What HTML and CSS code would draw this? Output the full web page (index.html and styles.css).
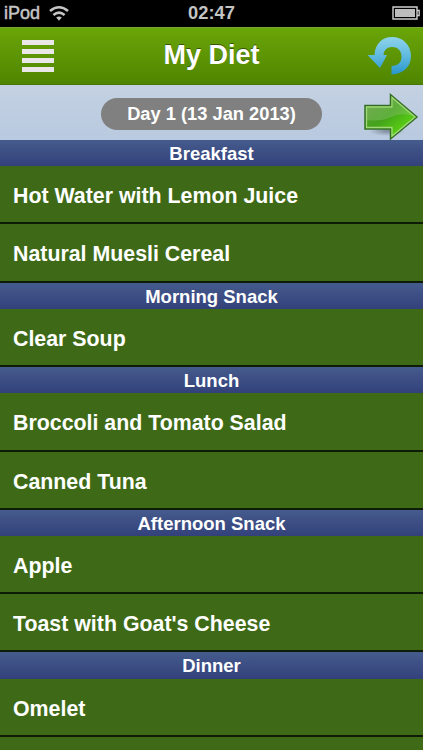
FILE: index.html
```html
<!DOCTYPE html>
<html lang="en">
<head>
<meta charset="utf-8">
<title>My Diet</title>
<link rel="stylesheet" href="styles.css">
</head>
<body>
<div class="status">
  <div class="carrier"><span>iPod</span>
    <svg width="20" height="16" viewBox="0 0 20 16" fill="none" stroke="#c4c4c4" stroke-width="2.6"><path d="M1 6Q10-1.5 19 6M4.400 10Q10 5.300 15.600 10"/><path d="M10 15.700L7.200 12.600Q10 10.400 12.800 12.600Z" fill="#c4c4c4" stroke="none"/></svg>
  </div>
  <time>02:47</time>
  <svg class="battery" width="28" height="14" viewBox="0 0 28 14"><path d="M1 1H25V13H1Z" fill="none" stroke="#d0d0d0" stroke-width="1.4"/><path d="M3 3H23V11H3Z" fill="#bdbdbd"/><path d="M25 4.500H27.200V9.500H25" fill="none" stroke="#d0d0d0" stroke-width="1.3"/></svg>
</div>
<header class="nav">
  <div class="menu"><i></i><i></i><i></i><i></i></div>
  <h1>My Diet</h1>
  <svg class="refresh" width="46" height="42" viewBox="0 0 46 42">
    <defs><linearGradient id="blue" x1="0" y1="0" x2="0" y2="1"><stop offset="0" stop-color="#8ed3ec"/><stop offset=".5" stop-color="#60bade"/><stop offset="1" stop-color="#2996cc"/></linearGradient></defs>
    <path d="M8.500 20C9 9 16 2 26 2C37 2 45 10 45 21C45 32 37 39 25.500 39.500V31C31 31 35.500 28 35.500 22C35.500 15 31 12 26 12C21 12 18 15 17.500 20H21L14 33L1.500 20Z" fill="url(#blue)"/>
  </svg>
</header>
<div class="datebar">
  <div class="pill">Day 1 (13 Jan 2013)</div>
  <svg class="next" width="58" height="50" viewBox="0 0 58 50">
    <defs><linearGradient id="green" x1="0" y1="0" x2="1" y2="1"><stop offset="0" stop-color="#5f9e3c"/><stop offset=".45" stop-color="#44a31b"/><stop offset=".7" stop-color="#55c814"/><stop offset="1" stop-color="#3c9a18"/></linearGradient>
    <radialGradient id="shade"><stop offset="0" stop-color="#53606b" stop-opacity=".6"/><stop offset="1" stop-color="#53606b" stop-opacity="0"/></radialGradient></defs>
    <ellipse cx="24" cy="39" rx="18" ry="5" fill="url(#shade)"/>
    <path d="M2 13.500H27.500V2.500L54 25L27.500 47V37H2Z" fill="url(#green)" stroke="#326c25" stroke-width="1.500"/>
    <path d="M3.500 15H29V5.500L52 25L29 44V35.500H3.500Z" fill="none" stroke="#a3d879" stroke-width="1.300"/>
    <path d="M4 16H30V7L50 24Q38 20 28 25Q18 30 4 28Z" fill="#b5d5a2" opacity=".25"/>
  </svg>
</div>
<main>
  <h2>Breakfast</h2>
  <p>Hot Water with Lemon Juice</p>
  <p>Natural Muesli Cereal</p>
  <h2>Morning Snack</h2>
  <p>Clear Soup</p>
  <h2>Lunch</h2>
  <p>Broccoli and Tomato Salad</p>
  <p>Canned Tuna</p>
  <h2>Afternoon Snack</h2>
  <p>Apple</p>
  <p>Toast with Goat's Cheese</p>
  <h2>Dinner</h2>
  <p>Omelet</p>
</main>
</body>
</html>
```
FILE: styles.css
```css
* { box-sizing: border-box; }
body {
  margin: 0;
  height: 750px;
  overflow: hidden;
  background: #3e6a17;
  color: #fff;
  font-family: "Liberation Sans", Arial, sans-serif;
}
.status {
  height: 26.500px;
  background: #000;
  color: #c4c4c4;
  display: grid;
  grid-template-columns: 1fr auto 1fr;
  align-items: center;
  padding: 0 4px;
  font-size: 18px;
}
.carrier { display: flex; align-items: center; gap: 9px; -webkit-text-stroke: .5px #c4c4c4; }
.status time { font-weight: bold; font-size: 18.300px; }
.battery { justify-self: end; margin-right: -1px; }
.nav {
  height: 58.500px;
  display: grid;
  grid-template-columns: 1fr auto 1fr;
  align-items: center;
  padding: 0 11px;
  background: linear-gradient(#6aa508, #4f8500);
  border-top: 1px solid #78a936;
  border-bottom: 1px solid #477607;
}
.menu { display: grid; gap: 4px; width: 32px; margin-left: 11px; }
.menu i { height: 5px; background: #e9e7e7; }
h1 {
  margin: 0;
  padding-bottom: 2px;
  font-size: 27px;
  line-height: 30px;
  text-shadow: 0 -1px 0 #35560a;
}
.refresh { justify-self: end; }
.datebar {
  height: 55px;
  position: relative;
  display: flex;
  justify-content: center;
  align-items: center;
  background: linear-gradient(#c3d1e2, #b9c9df);
}
.pill {
  width: 221px;
  height: 32px;
  border-radius: 16px;
  margin-top: 2px;
  background: #808080;
  text-align: center;
  font-size: 18.300px;
  font-weight: bold;
  line-height: 32px;
}
.next { position: absolute; right: 2px; top: 7px; }
h2 {
  margin: 0;
  height: 26.440px;
  line-height: 27px;
  font-size: 18.500px;
  text-align: center;
  background: linear-gradient(#455b8d, #33417b);
}
p {
  margin: 0;
  height: 58.060px;
  padding-left: 13px;
  line-height: 60px;
  font-size: 21.350px;
  font-weight: bold;
  border-bottom: 1.500px solid #0d1b07;
  border-bottom-width: 2px;
}
```
